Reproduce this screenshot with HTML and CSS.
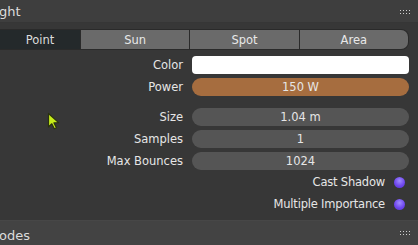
FILE: index.html
```html
<!DOCTYPE html>
<html>
<head>
<meta charset="utf-8">
<link rel="stylesheet" href="styles.css">
</head>
<body>
<div class="panel">
  <div class="header">
    <span class="title">ght</span>
    <span class="grip"></span>
  </div>
  <div class="content">
    <div class="tabs">
      <div class="tab active">Point</div>
      <div class="tab">Sun</div>
      <div class="tab">Spot</div>
      <div class="tab last">Area</div>
    </div>
    <div class="grid first">
      <div class="label">Color</div>
      <div class="field color"></div>
      <div class="label">Power</div>
      <div class="field power">150 W</div>
    </div>
    <div class="grid second">
      <div class="label">Size</div>
      <div class="field">1.04 m</div>
      <div class="label">Samples</div>
      <div class="field">1</div>
      <div class="label">Max Bounces</div>
      <div class="field">1024</div>
    </div>
    <div class="checks">
      <div class="check"><span>Cast Shadow</span><span class="dot"></span></div>
      <div class="check"><span>Multiple Importance</span><span class="dot"></span></div>
    </div>
  </div>
  <div class="header bottom">
    <span class="title">odes</span>
    <span class="grip"></span>
  </div>
</div>
<svg class="cursor" width="14" height="19" viewBox="0 0 14 19">
  <path d="M1.5 1.5 L1.5 15 L4.8 11.8 L7.3 16.8 L9.4 15.8 L7 10.9 L11.6 10.6 Z" fill="#c6ec1a" stroke="#2a3210" stroke-width="1.2" stroke-linejoin="round"/>
</svg>
</body>
</html>
```
FILE: styles.css
```css
html, body {
  margin: 0;
  padding: 0;
  background: #383838;
  width: 418px;
  height: 245px;
  overflow: hidden;
}
body {
  font-family: "DejaVu Sans", sans-serif;
  font-size: 11.5px;
  color: #e6e6e6;
  position: relative;
}
.panel {
  display: flex;
  flex-direction: column;
  height: 245px;
}
.header {
  height: 22px;
  background: #3e3e3e;
  display: flex;
  align-items: center;
  justify-content: space-between;
  padding-right: 8px;
  font-size: 13px;
  color: #dcdcdc;
  flex: none;
  border-bottom: 1px solid #363636;
}
.header .title {
  margin-left: -1px;
}
.grip {
  width: 11px;
  height: 5px;
  background-image: radial-gradient(circle, #cfcfcf 0.7px, transparent 0.8px);
  background-size: 3px 3px;
  background-position: 0 0;
}
.content {
  background: #373737;
  padding: 6px 9px 0 0;
  flex: 1;
}
.tabs {
  display: flex;
  height: 19px;
  border: 1px solid #2a2a2a;
  border-left: none;
  border-radius: 0 8px 8px 0;
  overflow: hidden;
}
.tab {
  flex: 1;
  background: #6a6a6a;
  display: flex;
  align-items: center;
  justify-content: center;
  border-left: 1px solid #2a2a2a;
  color: #e8e8e8;
}
.tab.active {
  flex: none;
  width: 80px;
  background: #24292b;
  border-left: none;
  color: #dcdcdc;
}
.grid {
  display: grid;
  grid-template-columns: 183px 1fr;
  column-gap: 9px;
  row-gap: 4px;
  align-items: center;
}
.grid.first {
  margin-top: 6px;
}
.grid.second {
  margin-top: 12px;
}
.label {
  text-align: right;
  color: #e6e6e6;
}
.field {
  height: 18px;
  background: #555555;
  border-radius: 9px;
  display: flex;
  align-items: center;
  justify-content: center;
  color: #e6e6e6;
}
.field.color {
  background: #ffffff;
  border-radius: 4px;
}
.field.power {
  background: #a66d3f;
}
.checks {
  margin-top: 1px;
  display: flex;
  flex-direction: column;
}
.check {
  height: 22px;
  display: flex;
  align-items: center;
  justify-content: flex-end;
  gap: 9px;
  padding-right: 4px;
  letter-spacing: -0.2px;
}
.dot {
  width: 11px;
  height: 11px;
  border-radius: 50%;
  background: radial-gradient(circle at 50% 35%, #a08cff 0%, #7048ee 55%, #5430cc 100%);
}
.header.bottom {
  background: #434343;
  border-top: 1px solid #474747;
  border-bottom: none;
  height: 25px;
  align-items: flex-end;
  padding-bottom: 2px;
  box-sizing: border-box;
}
.header.bottom .grip {
  margin-bottom: 8px;
}
.cursor {
  position: absolute;
  left: 47px;
  top: 112px;
}
```
